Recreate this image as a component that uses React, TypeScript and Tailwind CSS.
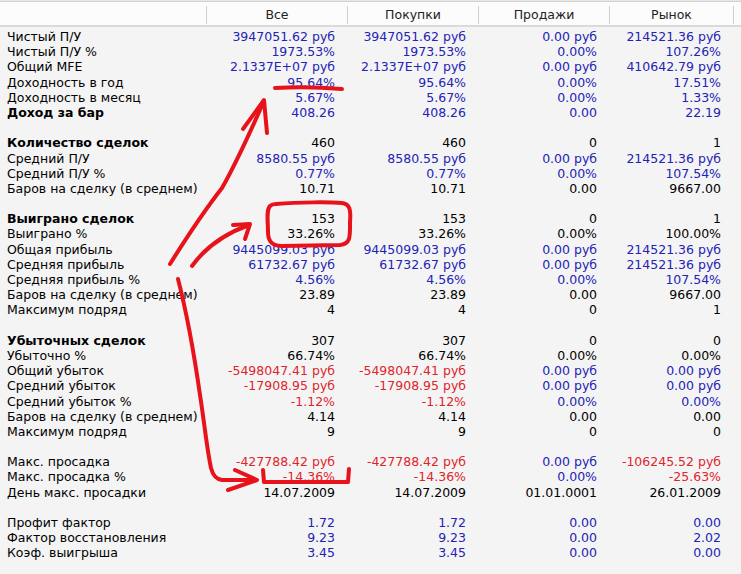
const F = { fontFamily: '"DejaVu Sans", Verdana, sans-serif' };

type Row = { l: string; bold?: boolean; c: string; v: string[] } | null;

// c: one letter per value column — b = blue, r = red, k = black
const rows: Row[] = [
  { l: "Чистый П/У", c: "bbbb", v: ["3947051.62 руб", "3947051.62 руб", "0.00 руб", "214521.36 руб"] },
  { l: "Чистый П/У %", c: "bbbb", v: ["1973.53%", "1973.53%", "0.00%", "107.26%"] },
  { l: "Общий MFE", c: "bbbb", v: ["2.1337E+07 руб", "2.1337E+07 руб", "0.00 руб", "410642.79 руб"] },
  { l: "Доходность в год", c: "bbbb", v: ["95.64%", "95.64%", "0.00%", "17.51%"] },
  { l: "Доходность в месяц", c: "bbbb", v: ["5.67%", "5.67%", "0.00%", "1.33%"] },
  { l: "Доход за бар", bold: true, c: "bbbb", v: ["408.26", "408.26", "0.00", "22.19"] },
  null,
  { l: "Количество сделок", bold: true, c: "kkkk", v: ["460", "460", "0", "1"] },
  { l: "Средний П/У", c: "bbbb", v: ["8580.55 руб", "8580.55 руб", "0.00 руб", "214521.36 руб"] },
  { l: "Средний П/У %", c: "bbbb", v: ["0.77%", "0.77%", "0.00%", "107.54%"] },
  { l: "Баров на сделку (в среднем)", c: "kkkk", v: ["10.71", "10.71", "0.00", "9667.00"] },
  null,
  { l: "Выиграно сделок", bold: true, c: "kkkk", v: ["153", "153", "0", "1"] },
  { l: "Выиграно %", c: "kkkk", v: ["33.26%", "33.26%", "0.00%", "100.00%"] },
  { l: "Общая прибыль", c: "bbbb", v: ["9445099.03 руб", "9445099.03 руб", "0.00 руб", "214521.36 руб"] },
  { l: "Средняя прибыль", c: "bbbb", v: ["61732.67 руб", "61732.67 руб", "0.00 руб", "214521.36 руб"] },
  { l: "Средняя прибыль %", c: "bbbb", v: ["4.56%", "4.56%", "0.00%", "107.54%"] },
  { l: "Баров на сделку (в среднем)", c: "kkkk", v: ["23.89", "23.89", "0.00", "9667.00"] },
  { l: "Максимум подряд", c: "kkkk", v: ["4", "4", "0", "1"] },
  null,
  { l: "Убыточных сделок", bold: true, c: "kkkk", v: ["307", "307", "0", "0"] },
  { l: "Убыточно %", c: "kkkk", v: ["66.74%", "66.74%", "0.00%", "0.00%"] },
  { l: "Общий убыток", c: "rrbb", v: ["-5498047.41 руб", "-5498047.41 руб", "0.00 руб", "0.00 руб"] },
  { l: "Средний убыток", c: "rrbb", v: ["-17908.95 руб", "-17908.95 руб", "0.00 руб", "0.00 руб"] },
  { l: "Средний убыток %", c: "rrbb", v: ["-1.12%", "-1.12%", "0.00%", "0.00%"] },
  { l: "Баров на сделку (в среднем)", c: "kkkk", v: ["4.14", "4.14", "0.00", "0.00"] },
  { l: "Максимум подряд", c: "kkkk", v: ["9", "9", "0", "0"] },
  null,
  { l: "Макс. просадка", c: "rrbr", v: ["-427788.42 руб", "-427788.42 руб", "0.00 руб", "-106245.52 руб"] },
  { l: "Макс. просадка %", c: "rrbr", v: ["-14.36%", "-14.36%", "0.00%", "-25.63%"] },
  { l: "День макс. просадки", c: "kkkk", v: ["14.07.2009", "14.07.2009", "01.01.0001", "26.01.2009"] },
  null,
  { l: "Профит фактор", c: "bbbb", v: ["1.72", "1.72", "0.00", "0.00"] },
  { l: "Фактор восстановления", c: "bbbb", v: ["9.23", "9.23", "0.00", "2.02"] },
  { l: "Коэф. выигрыша", c: "bbbb", v: ["3.45", "3.45", "0.00", "0.00"] },
];

const colour: Record<string, string> = {
  b: "text-[#2323b4]",
  r: "text-[#e0242c]",
  k: "text-black",
};

const grid = "grid grid-cols-[206px_141px_131px_131px_124px_1fr]";

function Header() {
  const cols = ["", "Все", "Покупки", "Продажи", "Рынок", ""];
  return (
    <div className={`${grid} h-[26px] border-t border-t-[#d2d2d2] border-b-2 border-b-[#dadada] bg-[#fcfcfc]`}>
      {cols.map((c, i) => (
        <div key={i} className="flex items-center">
          {i > 0 && <div className="w-px h-[18px] mt-[2px] bg-[#d0d0d0]" />}
          <div className="flex-1 pt-[3px] text-center text-[12.5px] text-[#222]">{c}</div>
        </div>
      ))}
    </div>
  );
}

function Annotations() {
  return (
    <svg
      className="absolute inset-0 pointer-events-none"
      width="741"
      height="574"
      viewBox="0 0 741 574"
      fill="none"
      stroke="#e8121b"
      strokeWidth="4"
      strokeLinecap="round"
      strokeLinejoin="round"
    >
      <path d="M275 88 Q308 86 342 89" />
      <path d="M170 264 C190 232 208 206 222 188 C238 160 252 128 264 101" />
      <path d="M243 129 L264 100 L267 133" />
      <path d="M192 266 C205 248 224 234 249 225" />
      <path d="M233 225 L250 224 L245 239" />
      <path d="M276 204 C300 202 330 202 342 203 C350 204 351 210 350 222 C350 236 351 244 340 245 L282 246 C271 246 268 240 268 232 C268 222 266 210 270 206 C272 204 274 204 276 204" />
      <path d="M178 279 C186 310 195 360 200 395 C204 420 207 450 211 468 C213 476 216 479 222 480 L252 480" />
      <path d="M235 470 L257 480 L228 490" />
      <path d="M263 470 L264 482 L348 482 L349 469" />
    </svg>
  );
}

export default function App() {
  return (
    <div className="relative w-[741px] h-[574px] overflow-hidden bg-[#f4f4f4]" style={F}>
      <div className="h-px bg-[#e6e6e6]" />
      <Header />
      <div className="pt-[2px]">
        {rows.map((r, i) =>
          r ? (
            <div key={i} className={`${grid} h-[15.2px] leading-[15.2px] text-[12.5px] whitespace-nowrap`}>
              <div className={`pl-[7px] text-black ${r.bold ? "font-bold" : ""}`}>{r.l}</div>
              {r.v.map((v, j) => (
                <div key={j} className={`pr-[12px] text-right ${colour[r.c[j]]}`}>
                  {v}
                </div>
              ))}
              <div />
            </div>
          ) : (
            <div key={i} className="h-[15.2px]" />
          )
        )}
      </div>
      <Annotations />
    </div>
  );
}
